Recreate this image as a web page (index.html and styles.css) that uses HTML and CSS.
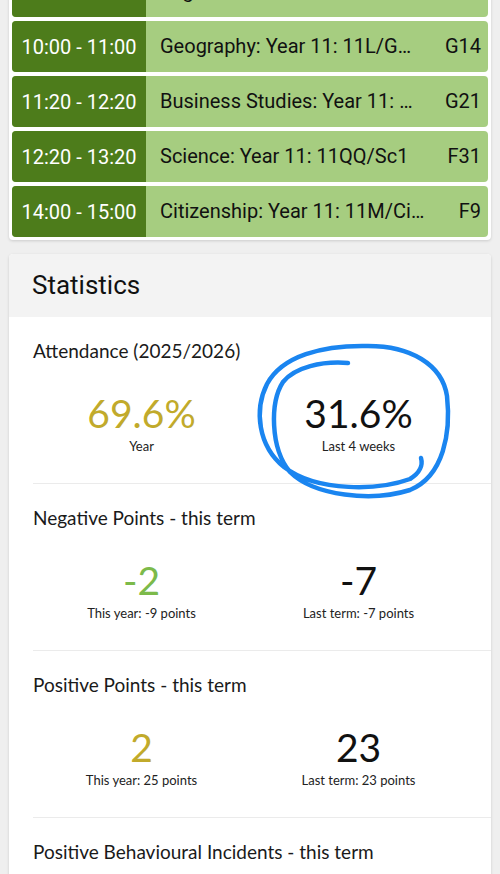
FILE: index.html
```html
<!DOCTYPE html>
<html lang="en">
<head>
    <meta charset="UTF-8">
    <title>Student Dashboard</title>
    <link rel="stylesheet" href="styles.css">
</head>
<body>

    <div class="timetable">
        <div class="lesson">
            <div class="time">09:00 - 10:00</div>
            <div class="subject">English: Year 11: 11L/En1</div>
            <div class="room">E12</div>
        </div>
        <div class="lesson">
            <div class="time">10:00 - 11:00</div>
            <div class="subject">Geography: Year 11: 11L/GGR1</div>
            <div class="room">G14</div>
        </div>
        <div class="lesson">
            <div class="time">11:20 - 12:20</div>
            <div class="subject">Business Studies: Year 11: 11B/Bs1</div>
            <div class="room">G21</div>
        </div>
        <div class="lesson">
            <div class="time">12:20 - 13:20</div>
            <div class="subject">Science: Year 11: 11QQ/Sc1</div>
            <div class="room">F31</div>
        </div>
        <div class="lesson">
            <div class="time">14:00 - 15:00</div>
            <div class="subject">Citizenship: Year 11: 11M/CiMM1</div>
            <div class="room">F9</div>
        </div>
    </div>

    <div class="card">
        <div class="card-header">Statistics</div>

        <div class="stat attendance">
            <div class="stat-title">Attendance (2025/2026)</div>
            <div class="stat-row">
                <div class="stat-item">
                    <div class="stat-value amber">69.6%</div>
                    <div class="stat-label">Year</div>
                </div>
                <div class="stat-item">
                    <div class="stat-value">31.6%</div>
                    <div class="stat-label">Last 4 weeks</div>
                </div>
            </div>
            <svg class="scribble" width="210" height="165" viewBox="0 0 210 165">
                <path d="M98,23 C72,21 45,27 33,42 C20,62 20,108 40,132 C64,156 122,162 160,150 C194,136 201,92 197,56 C192,24 160,6 118,6 C72,5 32,16 17,44 C4,70 8,106 34,127 C68,153 130,150 160,139 C170,133 173,125 171,118"
                      fill="none" stroke="#1a85f0" stroke-width="4.5" stroke-linecap="round"/>
            </svg>
        </div>

        <div class="stat">
            <div class="stat-title">Negative Points - this term</div>
            <div class="stat-row">
                <div class="stat-item">
                    <div class="stat-value green">-2</div>
                    <div class="stat-label">This year: -9 points</div>
                </div>
                <div class="stat-item">
                    <div class="stat-value">-7</div>
                    <div class="stat-label">Last term: -7 points</div>
                </div>
            </div>
        </div>

        <div class="stat">
            <div class="stat-title">Positive Points - this term</div>
            <div class="stat-row">
                <div class="stat-item">
                    <div class="stat-value amber">2</div>
                    <div class="stat-label">This year: 25 points</div>
                </div>
                <div class="stat-item">
                    <div class="stat-value">23</div>
                    <div class="stat-label">Last term: 23 points</div>
                </div>
            </div>
        </div>

        <div class="stat">
            <div class="stat-title">Positive Behavioural Incidents - this term</div>
            <div class="stat-row">
                <div class="stat-item">
                    <div class="stat-value">4</div>
                    <div class="stat-label">This year: 9 incidents</div>
                </div>
                <div class="stat-item">
                    <div class="stat-value">5</div>
                    <div class="stat-label">Last term: 5 incidents</div>
                </div>
            </div>
        </div>
    </div>

</body>
</html>
```

FILE: styles.css
```css
body {
    margin: 0;
    background-color: #efefef;
    font-family: Lato, "Noto Sans", sans-serif;
    color: #1a1a1a;
    overflow: hidden;
}
.timetable {
    margin: -37px 9px 0;
    padding: 3px;
    background-color: #ffffff;
    border-radius: 0 0 4px 4px;
    box-shadow: 0px 1px 3px rgba(0,0,0,0.15);
    display: flex;
    flex-direction: column;
    gap: 4px;
    font-family: Roboto, "Liberation Sans", sans-serif;
    font-size: 20px;
}
.lesson {
    display: flex;
    height: 51px;
    border-radius: 4px;
    overflow: hidden;
    background-color: #a6cd80;
}
.time {
    width: 134px;
    flex-shrink: 0;
    background-color: #4d7c1b;
    color: #ffffff;
    display: flex;
    align-items: center;
    justify-content: center;
}
.subject {
    flex: 1;
    min-width: 0;
    padding-left: 14px;
    line-height: 51px;
    color: #111;
    white-space: nowrap;
    overflow: hidden;
    text-overflow: ellipsis;
}
.room {
    line-height: 51px;
    padding: 0 7px 0 22px;
    color: #111;
}
.card {
    margin: 14px 9px 0;
    background-color: #ffffff;
    border-radius: 4px;
    box-shadow: 0px 1px 3px rgba(0,0,0,0.15);
    overflow: hidden;
}
.card-header {
    height: 63px;
    line-height: 63px;
    padding-left: 23px;
    background-color: #f3f3f3;
    font-family: Roboto, "Liberation Sans", sans-serif;
    font-size: 26px;
    color: #111;
}
.stat {
    position: relative;
    margin-left: 24px;
    padding: 22px 24px 29px 0;
    border-bottom: 1px solid #ebebeb;
}
.stat-title {
    font-size: 19px;
    line-height: 24px;
}
.stat-row {
    display: grid;
    grid-template-columns: 1fr 1fr;
    margin-top: 28px;
    text-align: center;
}
.stat-value {
    font-size: 39px;
    line-height: 44px;
    color: #111;
}
.stat-value.amber {
    color: #c1aa2b;
}
.stat-value.green {
    color: #7cba4a;
}
.stat-label {
    margin-top: 3px;
    font-size: 13px;
    line-height: 16px;
    color: #222;
}
.scribble {
    position: absolute;
    left: 217px;
    top: 23px;
}
```
